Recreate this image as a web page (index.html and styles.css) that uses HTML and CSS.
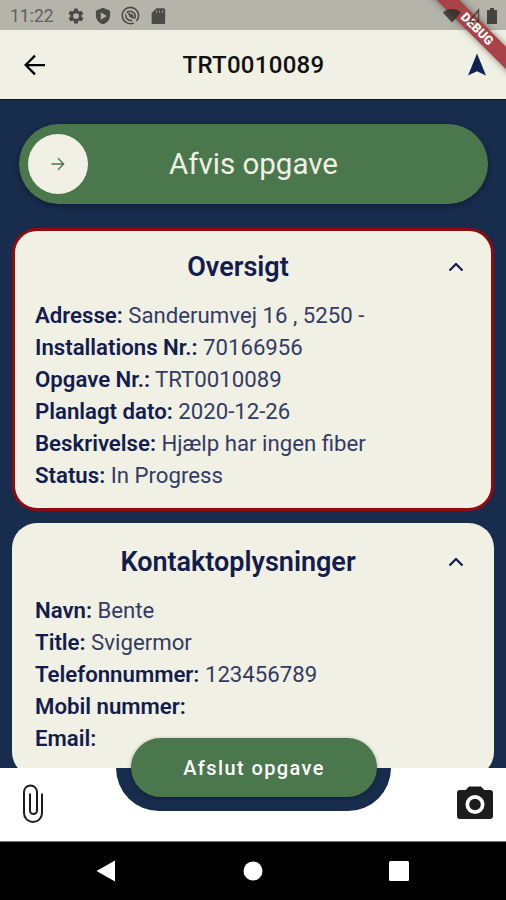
FILE: index.html
```html
<!DOCTYPE html>
<html lang="da">
<head>
  <meta charset="UTF-8">
  <meta name="viewport" content="width=device-width, initial-scale=1">
  <title>TRT0010089</title>
  <link rel="stylesheet" href="styles.css">
</head>
<body>
  <div class="phone">
    <div class="status-bar">
      <span class="clock">11:22</span>
      <div class="status-left">
        <svg width="18" height="18" viewBox="0 0 24 24"><path d="M19.4 13a7.500 7.500 0 0 0 0-2l2.100-1.600a.5.5 0 0 0 .1-.6l-2-3.500a.5.5 0 0 0-.6-.2l-2.500 1a7.300 7.300 0 0 0-1.700-1l-.4-2.600a.5.5 0 0 0-.5-.4h-4a.5.5 0 0 0-.5.4L9 5.100a7.700 7.700 0 0 0-1.700 1l-2.500-1a.5.5 0 0 0-.6.2l-2 3.500a.5.5 0 0 0 .1.6L4.500 11a7.900 7.900 0 0 0 0 2l-2.100 1.600a.5.5 0 0 0-.1.6l2 3.500c.1.200.4.300.6.200l2.500-1c.5.400 1.100.700 1.700 1l.4 2.600c0 .2.200.4.5.4h4c.300 0 .5-.2.5-.4l.4-2.600a7.300 7.300 0 0 0 1.700-1l2.500 1c.2.100.5 0 .6-.2l2-3.500a.5.5 0 0 0-.1-.6zM12 15.800a3.800 3.800 0 1 1 0-7.600 3.800 3.800 0 0 1 0 7.600z"/></svg>
        <svg width="18" height="18" viewBox="0 0 24 24"><path fill-rule="evenodd" d="M12 1L2.500 5v6c0 5.600 4 10.700 9.500 12 5.500-1.300 9.500-6.400 9.500-12V5zM9 7l8 5-8 5z"/></svg>
        <svg width="19" height="19" viewBox="0 0 24 24"><g fill="none" stroke="#4b4b46" stroke-width="2"><path d="M19.500 19A10.300 10.300 0 1 0 16 21.500"/><path d="M7 8.500a6.500 6.500 0 0 1 11 4.500 6.500 6.500 0 0 1-1 3"/><path d="M6 11a6.300 6.300 0 0 0 8 7"/></g><path d="M8 8l7 3 1.500 5.500L11 14z"/></svg>
        <svg width="18" height="18" viewBox="0 0 24 24"><path d="M19.500 1.500H10L3.500 8v12.500a2 2 0 0 0 2 2h14a2 2 0 0 0 2-2v-17a2 2 0 0 0-2-2z"/><path class="sd-pins" d="M10 4v4M14 4v4M18 4v4"/></svg>
      </div>
      <div class="status-right">
        <svg width="18" height="15" viewBox="0 0 18 15"><path d="M0 4.500a13.500 13.500 0 0 1 18 0L9 14.500z"/></svg>
        <svg width="12" height="15" viewBox="0 0 12 15"><path d="M1.500 13.500L10.500 2v11.500z" fill="none" stroke="#30302d" stroke-width="1.300"/></svg>
        <svg width="10" height="16" viewBox="0 0 10 16"><path d="M3 0h4v2h3v14H0V2h3z"/></svg>
      </div>
    </div>

    <header class="app-bar">
      <svg class="back" width="30" height="30" viewBox="0 0 24 24"><path d="M20 12H5M12 4.500L4.500 12l7.500 7.500" fill="none" stroke="#000" stroke-width="1.800"/></svg>
      <h1>TRT0010089</h1>
      <svg class="navigate" width="20" height="24" viewBox="0 0 20 24"><path d="M10 .5L19 22.500l-9-4.300-9 4.300z"/></svg>
    </header>

    <main class="content">
      <div class="slide-button">
        <div class="slide-thumb">
          <svg width="16" height="16" viewBox="0 0 16 16"><path d="M1.500 8h12M8 2.300L13.700 8 8 13.700" fill="none" stroke="#4b774d" stroke-width="1.300"/></svg>
        </div>
        <span class="slide-label">Afvis opgave</span>
      </div>

      <section class="card card-alert">
        <div class="card-header">
          <h2>Oversigt</h2>
          <svg class="chevron" width="16" height="10" viewBox="0 0 16 10"><path d="M1.500 8.500L8 2l6.500 6.500"/></svg>
        </div>
        <p><b>Adresse:</b> Sanderumvej 16 , 5250 -</p>
        <p><b>Installations Nr.:</b> 70166956</p>
        <p><b>Opgave Nr.:</b> TRT0010089</p>
        <p><b>Planlagt dato:</b> 2020-12-26</p>
        <p><b>Beskrivelse:</b> Hjælp har ingen fiber</p>
        <p><b>Status:</b> In Progress</p>
      </section>

      <section class="card">
        <div class="card-header">
          <h2>Kontaktoplysninger</h2>
          <svg class="chevron" width="16" height="10" viewBox="0 0 16 10"><path d="M1.500 8.500L8 2l6.500 6.500"/></svg>
        </div>
        <p><b>Navn:</b> Bente</p>
        <p><b>Title:</b> Svigermor</p>
        <p><b>Telefonnummer:</b> 123456789</p>
        <p><b>Mobil nummer:</b></p>
        <p><b>Email:</b></p>
      </section>
    </main>

    <footer class="bottom-bar">
      <svg class="clip" width="22" height="42" viewBox="0 0 22 42"><path d="M20 10.500V30a9 9 0 0 1-18 0V9a6.500 6.500 0 0 1 13 0v18.500a3.500 3.500 0 0 1-7 0V10.500"/></svg>
      <div class="notch">
        <button class="finish-btn">Afslut opgave</button>
      </div>
      <svg class="camera" width="36" height="34" viewBox="0 0 36 34"><path fill-rule="evenodd" d="M12 .5h12L27.300 4H33a3 3 0 0 1 3 3v23a3 3 0 0 1-3 3H3a3 3 0 0 1-3-3V7a3 3 0 0 1 3-3h5.700zM18 9a9.500 9.500 0 1 0 0 19 9.500 9.500 0 0 0 0-19z"/><circle cx="18" cy="18.500" r="5.800"/></svg>
    </footer>

    <nav class="system-nav">
      <svg width="20" height="22" viewBox="0 0 20 22"><path d="M19 .5v21L.5 11z"/></svg>
      <svg width="20" height="20" viewBox="0 0 20 20"><circle cx="10" cy="10" r="9.500"/></svg>
      <svg width="20" height="20" viewBox="0 0 20 20"><rect width="20" height="20" rx="1.500"/></svg>
    </nav>

    <div class="debug-ribbon">DEBUG</div>
  </div>
</body>
</html>
```

FILE: styles.css
```css
:root {
  --navy: #182c4d;
  --cream: #f0f0e4;
  --green: #4b774d;
  --text: #131c4c;
  --alert: #8f0b12;
}

* {
  box-sizing: border-box;
}

body {
  margin: 0;
  font-family: Roboto, "Liberation Sans", sans-serif;
}

h1, h2, p {
  margin: 0;
}

svg {
  display: block;
  flex: none;
}

.phone {
  position: relative;
  display: flex;
  flex-direction: column;
  width: 506px;
  height: 900px;
  overflow: hidden;
  background: var(--navy);
}

.status-bar {
  display: flex;
  align-items: center;
  height: 30px;
  padding: 1px 9px 0 10px;
  background: #b4b4ab;
  fill: #4b4b46;
}

.clock {
  width: 57px;
  font-size: 17.5px;
  color: #60605b;
}

.status-left {
  display: flex;
  align-items: center;
  gap: 9px;
}

.sd-pins {
  stroke: #85857e;
  stroke-width: 1.5;
}

.status-right {
  position: relative;
  z-index: 3;
  display: flex;
  align-items: center;
  gap: 7px;
  margin-left: auto;
  fill: #30302d;
  opacity: 0.85;
}

.app-bar {
  display: flex;
  align-items: center;
  justify-content: space-between;
  height: 70px;
  padding: 0 19px 0 20px;
  background: var(--cream);
  border-bottom: 1px solid #0c1220;
}

.app-bar h1 {
  margin-right: 10px;
  font-size: 24px;
  font-weight: 500;
  letter-spacing: 0.3px;
  color: #111;
}

.navigate {
  fill: #102355;
}

.content {
  flex: 1;
  min-height: 0;
  padding: 24px 12px 0;
  overflow: hidden;
}

.slide-button {
  display: flex;
  align-items: center;
  height: 80px;
  margin: 0 6px 24px 7px;
  padding: 0 9px 1px;
  border-radius: 40px;
  background: var(--green);
  box-shadow: 0 2px 6px rgba(0, 0, 0, 0.35);
}

.slide-thumb {
  display: flex;
  align-items: center;
  justify-content: center;
  width: 60px;
  height: 60px;
  border-radius: 50%;
  background: var(--cream);
}

.slide-label {
  flex: 1;
  padding-right: 60px;
  text-align: center;
  font-size: 29.5px;
  color: var(--cream);
}

.card {
  height: 254px;
  margin-bottom: 12px;
  padding: 14px 23px 0;
  border-radius: 25px;
  background: var(--cream);
  color: #343b63;
}

.card-alert {
  height: 283px;
  padding: 11px 20px 0;
  border: 3px solid var(--alert);
}

.card-header {
  display: grid;
  grid-template-columns: 1fr 16px;
  align-items: center;
  height: 50px;
  margin: 0 7px 7px 0;
}

.card h2 {
  padding-right: 7px;
  text-align: center;
  font-size: 27px;
  font-weight: 600;
  color: var(--text);
}

.chevron {
  fill: none;
  stroke: var(--text);
  stroke-width: 2.2;
}

.card p {
  height: 32px;
  font-size: 22.2px;
  font-weight: 370;
  line-height: 32px;
  white-space: nowrap;
}

.card b {
  font-weight: 600;
  color: var(--text);
}

.bottom-bar {
  position: relative;
  display: flex;
  align-items: flex-start;
  height: 74px;
  padding: 0 13px 0 22px;
  background: #fff;
  border-bottom: 1px solid #777;
}

.clip {
  margin-top: 15px;
  fill: none;
  stroke: #1c1c1c;
  stroke-width: 2;
}

.camera {
  margin: 18px 0 0 auto;
  fill: #1c1c1c;
}

.notch {
  width: 275px;
  height: 43px;
  margin-left: 72px;
  padding: 0 14px 0 15px;
  border-radius: 0 0 43px 43px;
  background: var(--navy);
}

.finish-btn {
  display: block;
  width: 246px;
  height: 59px;
  margin-top: -30px;
  padding: 0;
  border: none;
  border-radius: 30px;
  background: var(--green);
  color: #fff;
  font-family: inherit;
  font-size: 20px;
  font-weight: 500;
  letter-spacing: 1.4px;
  box-shadow: 0 1px 4px rgba(0, 0, 0, 0.3);
}

.system-nav {
  display: flex;
  align-items: center;
  justify-content: space-between;
  height: 58px;
  padding: 0 97px 0 96px;
  background: #000;
  fill: #fff;
}

/* corner banner laid over the bars */
.debug-ribbon {
  position: absolute;
  z-index: 2;
  top: 21px;
  left: 397px;
  width: 160px;
  height: 16px;
  transform: rotate(45deg);
  background: #a94347;
  color: #fff;
  font-size: 12.5px;
  font-weight: 900;
  line-height: 16px;
  text-align: center;
  box-shadow: 0 0 7px rgba(0, 0, 0, 0.45);
}
```
